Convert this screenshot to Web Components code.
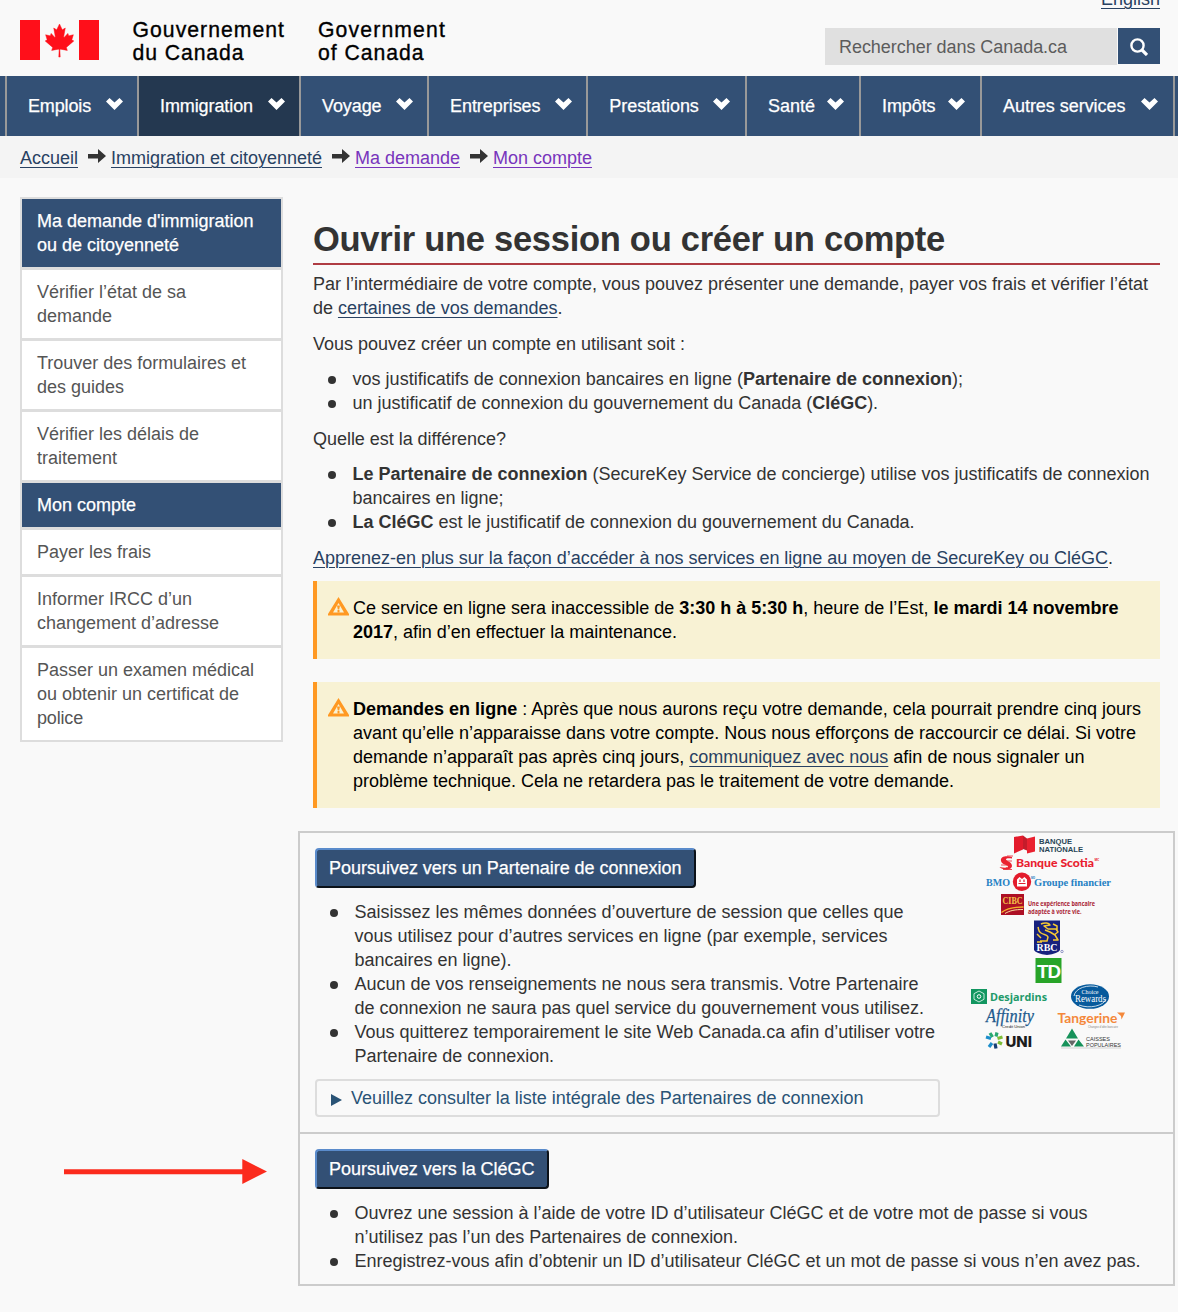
<!DOCTYPE html>
<html lang="fr">
<head>
<meta charset="utf-8">
<title>Ouvrir une session ou créer un compte</title>
<style>
html,body{margin:0;padding:0}
body{background:#f9f9f9;color:#333;font:18px/24px "Liberation Sans",Arial,sans-serif;height:1312px;overflow:hidden;position:relative}
</style>
</head>
<body>
<gc-header></gc-header>
<gc-nav>
<nav-item style="width:132px"><fit-line w="63">Emplois</fit-line></nav-item>
<nav-item style="width:162px" current><fit-line w="93">Immigration</fit-line></nav-item>
<nav-item style="width:128px"><fit-line w="59.5">Voyage</fit-line></nav-item>
<nav-item style="width:159.3px"><fit-line w="90.5">Entreprises</fit-line></nav-item>
<nav-item style="width:158.7px"><fit-line w="89.5">Prestations</fit-line></nav-item>
<nav-item style="width:114px"><fit-line w="47">Santé</fit-line></nav-item>
<nav-item style="width:121px"><fit-line w="53.5">Impôts</fit-line></nav-item>
<nav-item style="width:193px"><fit-line w="122.5">Autres services</fit-line></nav-item>
</gc-nav>
<bread-crumbs>
<ui-link><fit-line w="58">Accueil</fit-line></ui-link><crumb-arrow></crumb-arrow><ui-link><fit-line w="211">Immigration et citoyenneté</fit-line></ui-link><crumb-arrow></crumb-arrow><ui-link visited><fit-line w="105">Ma demande</fit-line></ui-link><crumb-arrow></crumb-arrow><ui-link visited><fit-line w="99">Mon compte</fit-line></ui-link>
</bread-crumbs>
<page-body>
<side-menu slot="side">
<side-item active><fit-line w="216.5">Ma demande d'immigration</fit-line> <fit-line w="142">ou de citoyenneté</fit-line></side-item>
<side-item><fit-line w="149">Vérifier l’état de sa</fit-line> <fit-line w="75">demande</fit-line></side-item>
<side-item><fit-line w="209">Trouver des formulaires et</fit-line> <fit-line w="87">des guides</fit-line></side-item>
<side-item><fit-line w="162">Vérifier les délais de</fit-line> <fit-line w="80">traitement</fit-line></side-item>
<side-item active><fit-line w="99">Mon compte</fit-line></side-item>
<side-item><fit-line w="114">Payer les frais</fit-line></side-item>
<side-item><fit-line w="155">Informer IRCC d’un</fit-line> <fit-line w="182">changement d’adresse</fit-line></side-item>
<side-item><fit-line w="217">Passer un examen médical</fit-line> <fit-line w="202">ou obtenir un certificat de</fit-line> <fit-line w="46">police</fit-line></side-item>
</side-menu>
<page-title><fit-line w="632">Ouvrir une session ou créer un compte</fit-line></page-title>
<text-block><fit-line w="835">Par l’intermédiaire de votre compte, vous pouvez présenter une demande, payer vos frais et vérifier l’état</fit-line> <fit-line w="249.5">de <ui-link>certaines de vos demandes</ui-link>.</fit-line></text-block>
<text-block style="--gap:11px"><fit-line w="372">Vous pouvez créer un compte en utilisant soit :</fit-line></text-block>
<text-block>
<bullet-item><fit-line w="610.5">vos justificatifs de connexion bancaires en ligne (<b>Partenaire de connexion</b>);</fit-line></bullet-item>
<bullet-item><fit-line w="525.5">un justificatif de connexion du gouvernement du Canada (<b>CléGC</b>).</fit-line></bullet-item>
</text-block>
<text-block style="--gap:11px"><fit-line w="193">Quelle est la différence?</fit-line></text-block>
<text-block>
<bullet-item><fit-line w="797"><b>Le Partenaire de connexion</b> (SecureKey Service de concierge) utilise vos justificatifs de connexion</fit-line> <fit-line w="151">bancaires en ligne;</fit-line></bullet-item>
<bullet-item><fit-line w="562"><b>La CléGC</b> est le justificatif de connexion du gouvernement du Canada.</fit-line></bullet-item>
</text-block>
<text-block style="--gap:11px"><fit-line w="800"><ui-link>Apprenez-en plus sur la façon d’accéder à nos services en ligne au moyen de SecureKey ou CléGC</ui-link>.</fit-line></text-block>
<alert-box><fit-line w="765.5">Ce service en ligne sera inaccessible de <b>3:30 h à 5:30 h</b>, heure de l’Est, <b>le mardi 14 novembre</b></fit-line> <fit-line w="324"><b>2017</b>, afin d’en effectuer la maintenance.</fit-line></alert-box>
<alert-box><fit-line w="788"><b>Demandes en ligne</b> : Après que nous aurons reçu votre demande, cela pourrait prendre cinq jours</fit-line> <fit-line w="783">avant qu’elle n’apparaisse dans votre compte. Nous nous efforçons de raccourcir ce délai. Si votre</fit-line> <fit-line w="731.5">demande n’apparaît pas après cinq jours, <ui-link>communiquez avec nous</ui-link> afin de nous signaler un</fit-line> <fit-line w="601">problème technique. Cela ne retardera pas le traitement de votre demande.</fit-line></alert-box>
<login-card slot="card">
<div slot="partner">
<cta-button><fit-line w="352.5">Poursuivez vers un Partenaire de connexion</fit-line></cta-button>
<bullet-item><fit-line w="549">Saisissez les mêmes données d’ouverture de session que celles que</fit-line> <fit-line w="533">vous utilisez pour d’autres services en ligne (par exemple, services</fit-line> <fit-line w="157">bancaires en ligne).</fit-line></bullet-item>
<bullet-item><fit-line w="564">Aucun de vos renseignements ne nous sera transmis. Votre Partenaire</fit-line> <fit-line w="569.5">de connexion ne saura pas quel service du gouvernement vous utilisez.</fit-line></bullet-item>
<bullet-item><fit-line w="580.5">Vous quitterez temporairement le site Web Canada.ca afin d’utiliser votre</fit-line> <fit-line w="199.5">Partenaire de connexion.</fit-line></bullet-item>
<expand-row><fit-line w="512.5">Veuillez consulter la liste intégrale des Partenaires de connexion</fit-line></expand-row>
</div>
<partner-logos slot="logos"></partner-logos>
<div slot="key">
<cta-button><fit-line w="205.5">Poursuivez vers la CléGC</fit-line></cta-button>
<bullet-item><fit-line w="733">Ouvrez une session à l’aide de votre ID d’utilisateur CléGC et de votre mot de passe si vous</fit-line> <fit-line w="383.5">n’utilisez pas l’un des Partenaires de connexion.</fit-line></bullet-item>
<bullet-item><fit-line w="786">Enregistrez-vous afin d’obtenir un ID d’utilisateur CléGC et un mot de passe si vous n’en avez pas.</fit-line></bullet-item>
</div>
</login-card>
</page-body>
<pointer-arrow></pointer-arrow>

<script>
const element = (name, html) => customElements.define(name, class extends HTMLElement {
  constructor() {
    super();
    this.attachShadow({ mode: 'open' }).innerHTML = html;
  }
});

element('gc-header', `<style>
:host{display:flex;height:76px;box-sizing:border-box;padding:0 18px 0 20px;justify-content:space-between}
.brand{display:flex;padding-top:18px;color:#000;font-size:21.2px;line-height:23px;-webkit-text-stroke:.35px #000}
.flag{margin-top:2px;width:79px;height:40px;display:block}
.fr{margin-left:33.500px;width:185.500px}
.tools{display:flex;flex-direction:column;align-items:flex-end}
.lang{margin-top:-13px;height:24px}
.search{display:flex;gap:1px;margin-top:17px}
.field{width:292px;height:37px;box-sizing:border-box;background:#e0e0e0;color:#5c5c5c;padding:7px 14px}
.go{width:42px;height:36px;background:#335075;display:flex;align-items:center;justify-content:center}
.go svg{margin-top:1px}
</style>
<div class="brand">
<svg class="flag" viewBox="0 0 79 40"><path fill="#ff0f1a" d="M0 0h20v40H0zM59 0h20v40H59z"/><path fill="#ff0f1a" stroke="#ff0f1a" stroke-width="60" transform="translate(39.5 20.4) scale(.0077 .0082)" d="m-90 2030 45-863a95 95 0 0 0-111-98l-859 151 116-320a65 65 0 0 0-20-73l-941-762 212-99a65 65 0 0 0 34-79l-186-572 542 115a65 65 0 0 0 73-38l105-247 423 454a65 65 0 0 0 111-57l-204-1052 327 189a65 65 0 0 0 91-27l332-652 332 652a65 65 0 0 0 91 27l327-189-204 1052a65 65 0 0 0 111 57l423-454 105 247a65 65 0 0 0 73 38l542-115-186 572a65 65 0 0 0 34 79l212 99-941 762a65 65 0 0 0-20 73l116 320-859-151a95 95 0 0 0-111 98l45 863z"/></svg>
<div class="fr"><fit-line w="152.5">Gouvernement</fit-line> <fit-line w="112">du Canada</fit-line></div>
<div><fit-line w="128">Government</fit-line> <fit-line w="106.5">of Canada</fit-line></div>
</div>
<div class="tools">
<div class="lang"><ui-link><fit-line w="59">English</fit-line></ui-link></div>
<div class="search"><div class="field"><fit-line w="228">Rechercher dans Canada.ca</fit-line></div><div class="go"><svg width="18" height="18" viewBox="0 0 18 18" fill="none" stroke="#fff"><circle cx="7.5" cy="7.5" r="6.1" stroke-width="2.4"/><path stroke-width="3.200" d="m12 12 5 5"/></svg></div></div>
</div>`);

element('gc-nav', `<style>
:host{display:flex;height:60px;background:#335075;padding-left:5px;overflow:hidden}
.end{border-left:2px solid #999}
</style><slot></slot><div class="end"></div>`);

element('nav-item', `<style>
:host{display:flex;flex:none;box-sizing:border-box;border-left:2px solid #999;padding:0 14.500px 0 21px;align-items:center;justify-content:space-between;color:#fff;-webkit-text-stroke:.25px #fff}
:host([current]){background:#243850}
svg{margin-top:-5px;stroke:none}
</style><slot></slot><svg width="17" height="12" viewBox="0 0 17 12"><path fill="#fff" d="M0 3.500 3.500 0l5 4.600L13.500 0 17 3.500 8.500 12z"/></svg>`);

element('bread-crumbs', `<style>
:host{display:flex;height:42px;box-sizing:border-box;background:#f4f4f4;padding:10px 20px}
</style><slot></slot>`);

element('crumb-arrow', `<style>
:host{display:block;margin:3px 5px 0 10px;height:14px}svg{display:block}
</style><svg width="18" height="14" viewBox="0 0 18 14"><path fill="#333" d="M0 5h10V0l8 7-8 7V9.500H0z"/></svg>`);

element('ui-link', `<style>
:host{color:#284162;text-decoration:underline;text-decoration-thickness:1px;text-underline-offset:3px}
:host([visited]){color:#7834bc}
</style><slot></slot>`);

element('page-body', `<style>
:host{display:flex;padding:19px 3px 0 20px}
.main{flex:1;margin-left:15px}
.copy{display:block;margin:0 15px 23px 15px}
</style><slot name="side"></slot><div class="main"><div class="copy"><slot></slot></div><slot name="card"></slot></div>`);

element('side-menu', `<style>
:host{display:flex;flex-direction:column;gap:3px;box-sizing:border-box;width:263px;border:2px solid #ddd;background:#ddd;align-self:flex-start}
</style><slot></slot>`);

element('side-item', `<style>
:host{display:block;background:#fff;color:#555;padding:10px 15px}
:host([active]){background:#335075;color:#fff;-webkit-text-stroke:.25px #fff}
</style><slot></slot>`);

element('page-title', `<style>
:host{display:block;height:68px;box-sizing:border-box;padding-top:22px;border-bottom:2px solid #af3c43;font-weight:bold;font-size:34.5px;line-height:40px}
</style><slot></slot>`);

element('text-block', `<style>
:host{display:block}
:host(:not([style])){margin-top:11px}
:host(:first-of-type){margin-top:7px!important}
:host([style]){margin-top:12px}
</style><slot></slot>`);

element('bullet-item', `<style>
:host{display:flex}
i{flex:none;width:8px;height:8px;border-radius:50%;background:#333;margin:9px 17px 0 14.600px}
</style><i></i><div><slot></slot></div>`);

element('alert-box', `<style>
:host{display:flex;box-sizing:border-box;background:#f8f2d4;border-left:4px solid #ff9922;color:#000;padding:15px 0 15px 11px;margin-top:23px}
:host(:first-of-type){margin-top:11px}
svg{flex:none;margin:1px 4px 0 0}
</style><svg width="21" height="19" viewBox="0 0 21 19"><path fill="#ff9922" fill-rule="evenodd" d="M10.5 0 21 17v1.500H0V17zM10.5 6 5 15.400h11z"/><path fill="#ff9922" d="M9 8.500h3l-.8 3.900H9.800zM9.500 13h2v2.500h-2z"/></svg><div><slot></slot></div>`);

element('cta-button', `<style>
:host{display:block;width:max-content;box-sizing:border-box;height:40px;padding:6px 12px;background:#335075;color:#fff;border:2px solid;border-color:#5a8bcb #0c1219 #0c1219 #5a8bcb;border-radius:4px;margin-bottom:12px;-webkit-text-stroke:.25px #fff}
</style><slot></slot>`);

element('expand-row', `<style>
:host{display:flex;align-items:center;width:625px;height:38px;box-sizing:border-box;border:2px solid #ddd;border-radius:4px;margin-top:11px;padding-left:14px;color:#295376}
svg{margin:3px 9px 0 0}
</style><svg width="11" height="12" viewBox="0 0 11 12"><path fill="#295376" d="M0 0 11 6 0 12z"/></svg><slot></slot>`);

element('login-card', `<style>
:host{display:block;width:877px;box-sizing:border-box;border:2px solid #ccc}
.a,.b{padding:15px 0 0 15px;box-sizing:border-box}
.a{display:flex;height:299px}
.b{height:152px;border-top:2px solid #ccc}
.l{margin:-15px 0 0 28px}
.a ::slotted(div){width:625px}
</style><div class="a"><slot name="partner"></slot><div class="l"><slot name="logos"></slot></div></div><div class="b"><slot name="key"></slot></div>`);

element('partner-logos', `<style>
:host{display:block}svg{display:block}
text{font-family:"Open Sans",sans-serif;font-weight:bold}
.s{font-family:"Liberation Serif",serif}
.r{font-family:"Liberation Sans",sans-serif}
.n{font-weight:normal}
</style><svg width="165" height="222" viewBox="968 833 165 222">
<path fill="#e31b2c" d="m1014 837 9-1.500v14l-9 4z"/><path fill="#c51c2b" d="m1023 835.500 4 3v12l-4-1.500z"/><path fill="#ea2130" d="m1027 838.500 8-2v15l-8 2z"/>
<text class="r" x="1039" y="844.200" font-size="7.500" textLength="33" lengthAdjust="spacingAndGlyphs" fill="#294657">BANQUE</text>
<text class="r" x="1039" y="851.500" font-size="7.500" textLength="44" lengthAdjust="spacingAndGlyphs" fill="#294657">NATIONALE</text>
<path fill="#ea2130" d="M1012 857c-5-1.500-12-1-11 4 .7 3.500 7 4 7 5.500s-4 1.500-8.500.5c2 3 12 4 12.500-1 .3-4-6-5-6-6.500s3-1.300 6-1z"/><path fill="none" stroke="#ea2130" stroke-width=".8" d="M1003 869.500h9M1007 856h6M1006 861h6M1001 865h6"/>
<text x="1016" y="867" font-size="11" style="font-family:Lato;font-weight:900" textLength="78" lengthAdjust="spacingAndGlyphs" fill="#e9202f">Banque Scotia</text>
<text x="1094.500" y="861" font-size="3" fill="#e9202f">MC</text>
<text class="s" x="986" y="886" font-size="10" textLength="24" lengthAdjust="spacingAndGlyphs" fill="#2681c4">BMO</text>
<circle cx="1022" cy="881.700" r="9.200" fill="#e31b2c"/><path fill="#fff" d="M1017 886.500v-7l2.500-2.500 2.500 2 2.500-2 2.500 2.500v7z"/><path stroke="#e31b2c" stroke-width="1.200" d="M1018.500 883.500h7M1020 879.500v2.500M1024 879.500v2.500"/>
<text x="1031" y="879" font-size="2.500" fill="#2681c4">MD</text>
<text class="s" x="1034" y="886" font-size="10" textLength="77" lengthAdjust="spacingAndGlyphs" fill="#2681c4">Groupe financier</text>
<path fill="#ad1025" d="M1001 894h23v21h-23z"/><path fill="none" stroke="#f5b52b" stroke-width="1.300" d="M1001.500 912.500c5-4 12-5.500 22-5.500"/><path fill="none" stroke="#f8dca0" d="M1005 913.500c5-3 10-4 18-4"/>
<text class="s" x="1002.500" y="904" font-size="10" textLength="20" lengthAdjust="spacingAndGlyphs" fill="#f7c54a">CIBC</text>
<text x="1028" y="906" font-size="6.500" textLength="67" lengthAdjust="spacingAndGlyphs" fill="#a92535">Une expérience bancaire</text>
<text x="1028" y="914" font-size="6.500" textLength="53.500" lengthAdjust="spacingAndGlyphs" fill="#a92535">adaptée à votre vie.</text>
<path fill="#17217d" d="M1034 920.500h26V950q-2 3.500-13 5-11-1.500-13-5z"/><path fill="none" stroke="#f5c933" stroke-width="1.500" stroke-linejoin="round" d="M1041 924c4-2 8-1 9 1l-6 1 4 3h8l2 3-4 3M1038 927c1 3 0 4 3 6s6 1 7 4l-1 4h-7M1037 934l4 4M1050 932l5 3 3 5h-5M1053 924l4 2v4M1045 930l5 2M1037 942h5"/>
<text class="s" x="1036.500" y="950.500" font-size="9.500" textLength="21" lengthAdjust="spacingAndGlyphs" fill="#fff">RBC</text><circle cx="1062" cy="951.500" r="1.200" fill="none" stroke="#555caa" stroke-width=".6"/>
<path fill="#28a428" d="M1035.500 958h26v25h-26z"/><text x="1037" y="977.500" font-size="18.500" style="font-family:'Liberation Sans';letter-spacing:-1px" textLength="23" lengthAdjust="spacingAndGlyphs" fill="#fff">TD</text>
<path fill="#129660" d="M971 989h16v15h-16z"/><path fill="none" stroke="#c5eadb" d="m979 991 5 2.700v5.600l-5 2.700-5-2.700v-5.600z"/><circle cx="979" cy="996.500" r="1.800" fill="none" stroke="#fff"/>
<text x="990" y="1000.500" font-size="11" textLength="57" lengthAdjust="spacingAndGlyphs" fill="#219a69">Desjardins</text>
<ellipse cx="1090" cy="996.500" rx="19" ry="12.300" fill="#075a9c"/><path fill="none" stroke="#d5e5f2" stroke-width=".9" d="M1098 987c-10-3-23 1-24 9M1079 1005c10 4 25 1 27-6"/>
<text class="s n" x="1081.500" y="994.300" font-size="6.500" fill="#fff" textLength="17" lengthAdjust="spacingAndGlyphs">Choice</text>
<text class="s n" x="1075" y="1001.500" font-size="9.500" fill="#fff" textLength="31" lengthAdjust="spacingAndGlyphs">Rewards</text>
<text class="s n" x="986" y="1022" font-size="18" font-style="italic" textLength="48" lengthAdjust="spacingAndGlyphs" fill="#1e5b8e" stroke="#1e5b8e" stroke-width=".25">Affinity</text>
<text class="r n" x="1002" y="1027.500" font-size="4" textLength="23" lengthAdjust="spacingAndGlyphs" fill="#222">Credit Union</text>
<text x="1057.500" y="1023" font-size="14" style="font-family:Lato" textLength="60" lengthAdjust="spacingAndGlyphs" fill="#f4883b">Tangerine</text><path fill="#f4883b" d="M1117 1012.500h8l-3.500 7-.5-3.500z"/>
<text class="r n" x="1088" y="1027.500" font-size="3" textLength="30" lengthAdjust="spacingAndGlyphs" fill="#888">Changez d’idée bancaire</text>
<g fill="none" stroke-width="3.200"><path stroke="#1c8ecb" d="m986 1037 5 1.500M989 1047l3-4"/><path stroke="#28a86f" d="m990 1033 2.500 4M997 1032.500l-1 4"/><path stroke="#7dbd37" d="m1002.500 1037-5 1.500M1002 1044l-4-2"/><path stroke="#163f75" d="m996 1048.500-1-5"/></g>
<text x="1005.500" y="1046.500" font-size="14.500" style="font-family:Inter;font-weight:800" textLength="26.500" lengthAdjust="spacingAndGlyphs" fill="#1c1c1c">UNI</text>
<path fill="#17925a" d="m1072 1028.500 6 10h-12zM1065.500 1039.500l5.500 7h-10zM1078.500 1039.500l5.500 7h-10z"/><path fill="#666" d="M1068 1040.500h8l-4 5.500z"/><path stroke="#bbb" stroke-width=".6" d="M1061 1048h60"/>
<text class="r n" x="1086" y="1041" font-size="6" textLength="24" lengthAdjust="spacingAndGlyphs" fill="#333">CAISSES</text>
<text class="r n" x="1086" y="1046.700" font-size="6" textLength="35" lengthAdjust="spacingAndGlyphs" fill="#333">POPULAIRES</text>
</svg>`);

element('pointer-arrow', `<style>
:host{display:block;position:absolute;left:64px;top:1159px}svg{display:block}
</style><svg width="203" height="25" viewBox="0 0 203 25"><path fill="#fb2b1d" d="M0 10.200h178.300V0L203 12.500 178.300 25V15.200H0z"/></svg>`);

/* One line of copy, tracked so that it spans the given width. */
customElements.define('fit-line', class extends HTMLElement {
  constructor() {
    super();
    this.attachShadow({ mode: 'open' }).innerHTML = '<style>:host{display:block;width:max-content;white-space:nowrap}</style><slot></slot>';
  }
  connectedCallback() {
    const natural = this.getBoundingClientRect().width;
    const count = this.textContent.length;
    this.style.letterSpacing = ((this.getAttribute('w') - natural) / count) + 'px';
  }
});
</script>
</body>
</html>
